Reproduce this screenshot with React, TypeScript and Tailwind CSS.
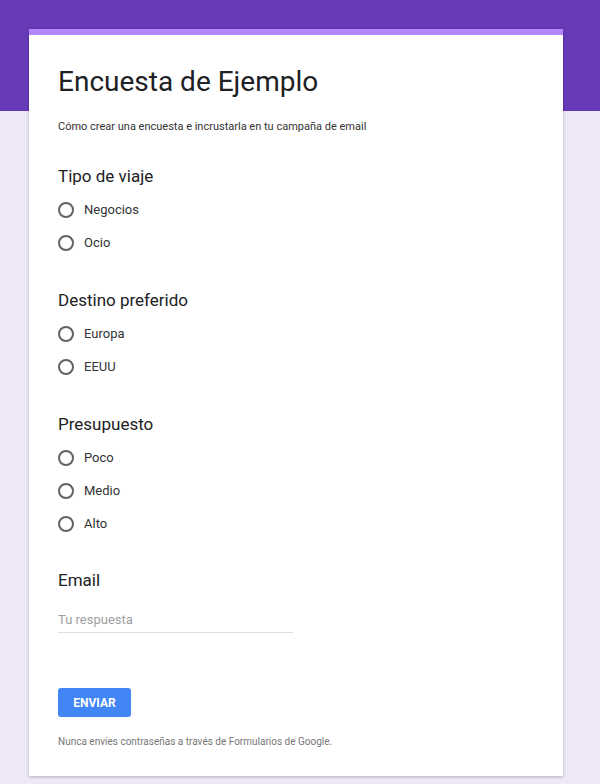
import React from 'react'

const sections = [
  { title: 'Tipo de viaje', options: ['Negocios', 'Ocio'] },
  { title: 'Destino preferido', options: ['Europa', 'EEUU'] },
  { title: 'Presupuesto', options: ['Poco', 'Medio', 'Alto'] },
]

const Radio = ({ label }: { label: string }) => (
  <label className="flex h-[33px] items-center">
    <span className="h-[16px] w-[16px] rounded-full border-2 border-[#5f6368]" />
    <span className="ml-[10px] text-[13px] text-[#333]">{label}</span>
  </label>
)

const App: React.FC = () => {
  return (
    <div className="min-h-[784px] bg-[#ede7f6] font-['Roboto',sans-serif]">
      <div className="h-[111px] bg-[#673ab7]" />
      <div className="ml-[29px] mt-[-82px] w-[534px] bg-white shadow-[0_1px_3px_rgba(0,0,0,0.25)]">
        <div className="h-[6px] bg-[#b388ff]" />
        <div className="px-[29px] pb-[27px] pt-[29px]">
          <h1 className="text-[28px] leading-[36px] text-[#202124]">Encuesta de Ejemplo</h1>
          <p className="mt-[19px] text-[11px] leading-[16px] text-[#333]">
            Cómo crear una encuesta e incrustarla en tu campaña de email
          </p>

          {sections.map((s) => (
            <div key={s.title} className="mt-[29px]">
              <h2 className="text-[17px] leading-[24px] text-[#202124]">{s.title}</h2>
              <div className="mt-[5px]">
                {s.options.map((o) => (
                  <Radio key={o} label={o} />
                ))}
              </div>
            </div>
          ))}

          <div className="mt-[28px]">
            <h2 className="text-[17px] leading-[24px] text-[#202124]">Email</h2>
            <div className="mt-[18px] w-[235px] border-b border-[#e0e0e0] pb-[2px] text-[13px] leading-[20px] text-[#9e9e9e]">
              Tu respuesta
            </div>
          </div>

          <button className="mt-[55px] h-[29px] w-[73px] rounded-[3px] bg-[#4285f4] text-[12px] font-bold text-white">
            ENVIAR
          </button>

          <p className="mt-[18px] text-[10px] leading-[14px] text-[#777]">
            Nunca envíes contraseñas a través de Formularios de Google.
          </p>
        </div>
      </div>
    </div>
  )
}

export default App
